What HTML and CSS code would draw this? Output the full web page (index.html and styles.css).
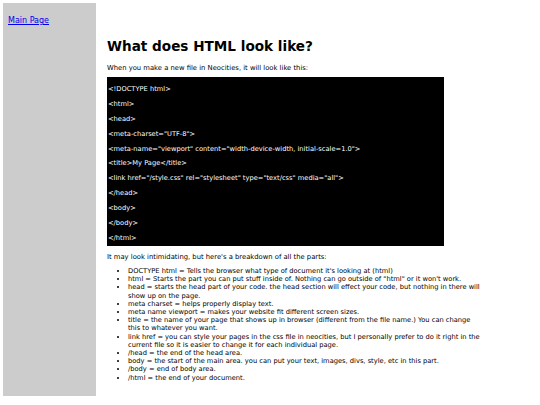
FILE: index.html
```html
<!DOCTYPE html>
<html>
<head>
<meta charset="UTF-8">
<link rel="stylesheet" href="styles.css">
</head>
<body>
<div class="page">
  <nav class="sidebar">
    <a href="#" class="navlink">Main Page</a>
  </nav>
  <main class="content">
    <h1 class="title">What does HTML look like?</h1>
    <p class="intro">When you make a new file in Neocities, it will look like this:</p>
    <div class="code">
      <p>&lt;!DOCTYPE html&gt;</p>
      <p>&lt;html&gt;</p>
      <p>&lt;head&gt;</p>
      <p>&lt;meta-charset="UTF-8"&gt;</p>
      <p>&lt;meta-name="viewport" content="width-device-width, initial-scale=1.0"&gt;</p>
      <p>&lt;title&gt;My Page&lt;/title&gt;</p>
      <p>&lt;link href="/style.css" rel="stylesheet" type="text/css" media="all"&gt;</p>
      <p>&lt;/head&gt;</p>
      <p>&lt;body&gt;</p>
      <p>&lt;/body&gt;</p>
      <p>&lt;/html&gt;</p>
    </div>
    <p class="intro2">It may look intimidating, but here's a breakdown of all the parts:</p>
    <ul class="parts">
      <li>DOCTYPE html = Tells the browser what type of document it's looking at (html)</li>
      <li>html = Starts the part you can put stuff inside of. Nothing can go outside of "html" or it won't work.</li>
      <li>head = starts the head part of your code. the head section will effect your code, but nothing in there will show up on the page.</li>
      <li>meta charset = helps properly display text.</li>
      <li>meta name viewport = makes your website fit different screen sizes.</li>
      <li>title = the name of your page that shows up in browser (different from the file name.) You can change this to whatever you want.</li>
      <li>link href = you can style your pages in the css file in neocities, but I personally prefer to do it right in the current file so it is easier to change it for each individual page.</li>
      <li>/head = the end of the head area.</li>
      <li>body = the start of the main area. you can put your text, images, divs, style, etc in this part.</li>
      <li>/body = end of body area.</li>
      <li>/html = the end of your document.</li>
    </ul>
  </main>
</div>
</body>
</html>
```
FILE: styles.css
```css
html, body {
  margin: 0;
  padding: 0;
  background: #fff;
}
body {
  padding: 3px;
  font-family: "DejaVu Sans", Verdana, sans-serif;
  color: #000;
}
.page {
  display: flex;
  align-items: flex-start;
}
.sidebar {
  width: 93px;
  height: 393px;
  background: #cccccc;
  flex-shrink: 0;
  padding: 5px 0 0 5px;
  box-sizing: border-box;
}
.navlink {
  font-size: 8px;
  color: #0000ee;
  text-decoration: underline;
}
.content {
  padding-left: 11px;
  width: 376px;
}
.title {
  font-size: 13.6px;
  font-weight: bold;
  margin: 34px 0 0 0;
  line-height: 18px;
}
.intro {
  font-size: 6.8px;
  margin: 9px 0 0 0;
  line-height: 8px;
}
.code {
  background: #000;
  color: #fff;
  width: 337px;
  height: 169px;
  margin-top: 5px;
  padding: 8px 1px 0 1px;
  box-sizing: border-box;
  display: flex;
  flex-direction: column;
  gap: 6.9px;
}
.code p {
  margin: 0;
  font-size: 6.7px;
  line-height: 8px;
}
.intro2 {
  font-size: 6.8px;
  margin: 7px 0 0 0;
  line-height: 8px;
}
.parts {
  font-size: 6.7px;
  line-height: 8.2px;
  margin: 6px 0 0 0;
  padding-left: 21px;
}
```
